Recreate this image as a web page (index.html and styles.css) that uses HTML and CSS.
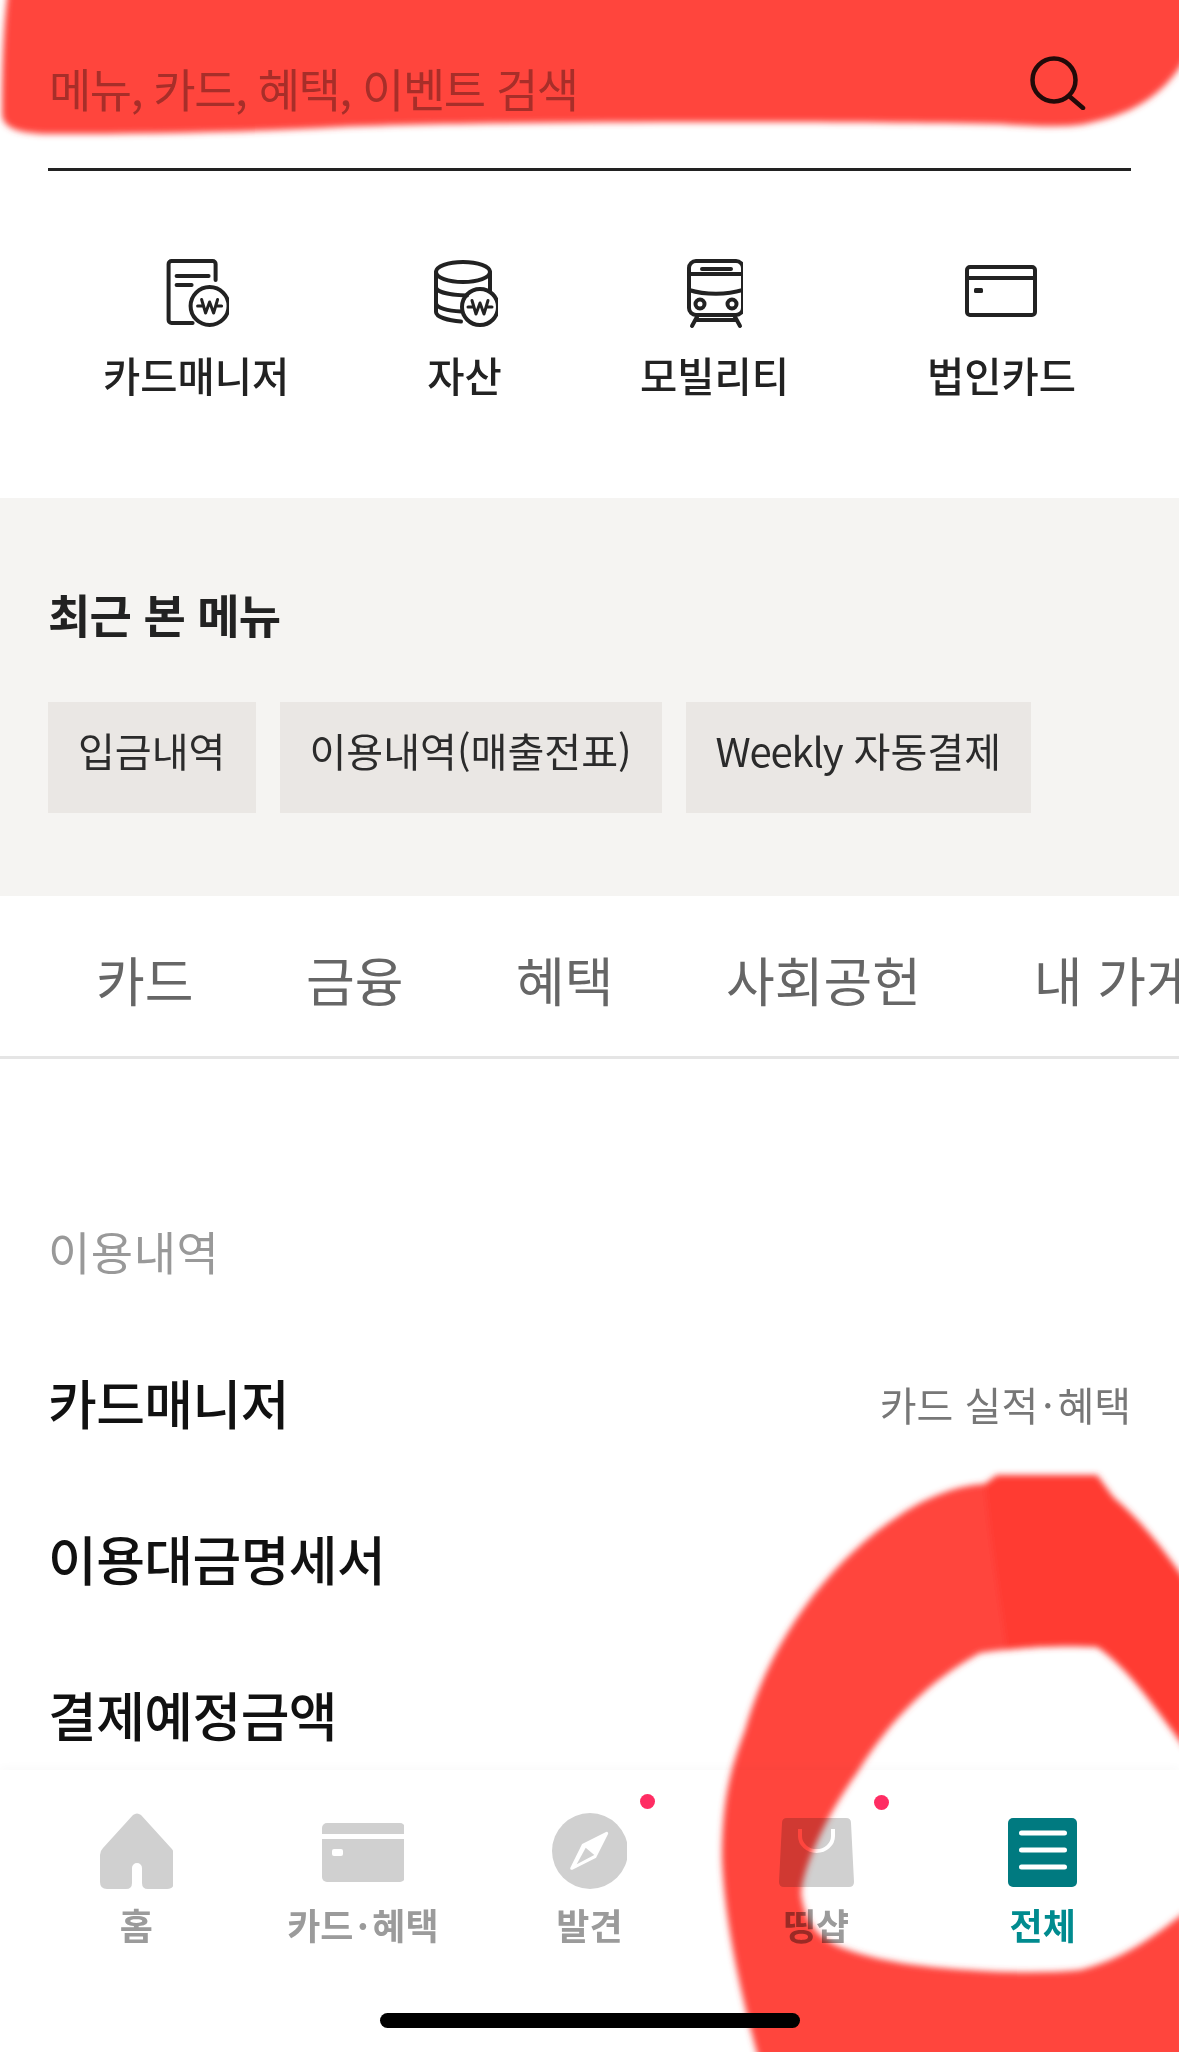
FILE: index.html
```html
<!DOCTYPE html>
<html lang="ko">
<head>
	<meta charset="UTF-8">
	<title>전체 메뉴</title>
	<link rel="stylesheet" href="styles.css">
</head>
<body>
	<div id="page">
		<div class="search">
			<span class="search-text">메뉴, 카드, 혜택, 이벤트 검색</span>
			<svg class="search-icon" viewBox="0 0 56 54" width="56" height="54">
				<circle cx="24" cy="24" r="21.5"/>
				<path d="M39 40L53 52"/>
			</svg>
		</div>

		<ul class="quick">
			<li>
				<svg class="line-icon" viewBox="-3.600 -1 66 72" width="66" height="72">
					<path d="M49 22V6a3 3 0 0 0-3-3H5a3 3 0 0 0-3 3v56a3 3 0 0 0 3 3h21"/>
					<path d="M10 18H42M10 27H25"/>
					<circle cx="43" cy="48" r="19"/>
					<path class="thin" d="M35 41.500L39 55L43 44L47 55L51 41.500M31 48H36M50 48H55"/>
				</svg>
				<span>카드매니저</span>
			</li>
			<li>
				<svg class="line-icon" viewBox="-2 0 66 72" width="66" height="72">
					<ellipse cx="29" cy="15" rx="27" ry="10"/>
					<path d="M2 15V55c0 5 12 8.500 25 9.500M56 15V34"/>
					<path d="M2 30c0 5 14 8 31 8.500M2 46c0 5 12 8 25 8.500"/>
					<circle cx="46" cy="50" r="18"/>
					<path class="thin" d="M38 43.500L42 57L46 46L50 57L54 43.500M34 50H39M53 50H58"/>
				</svg>
				<span>자산</span>
			</li>
			<li>
				<svg class="line-icon" viewBox="-2 0 58 72" width="58" height="72">
					<rect x="2" y="4" width="54" height="54" rx="7"/>
					<path d="M2 17H56M15 12H44"/>
					<path d="M2 33C18 38 40 38 56 33"/>
					<circle cx="13" cy="47" r="4.500"/>
					<circle cx="45" cy="47" r="4.500"/>
					<path d="M11 58L5 69M47 58L53 69M9 63H49"/>
				</svg>
				<span>모빌리티</span>
			</li>
			<li>
				<svg class="line-icon" viewBox="0 0 72 72" width="72" height="72">
					<rect x="2" y="10" width="68" height="48" rx="3"/>
					<path d="M2 21H70"/>
					<rect class="solid" x="9" y="31" width="9" height="5" rx="1.500"/>
				</svg>
				<span>법인카드</span>
			</li>
		</ul>

		<div class="recent">
			<h2>최근 본 메뉴</h2>
			<div class="chips">
				<a class="chip">입금내역</a>
				<a class="chip">이용내역(매출전표)</a>
				<a class="chip"><span class="chip-en">Weekly</span> 자동결제</a>
			</div>
		</div>

		<ul class="tabs">
			<li>카드</li>
			<li>금융</li>
			<li>혜택</li>
			<li>사회공헌</li>
			<li>내 가게</li>
		</ul>

		<div class="menu">
			<h3>이용내역</h3>
			<div class="menu-row"><b>카드매니저</b><span>카드 실적<i class="mid">·</i>혜택</span></div>
			<div class="menu-row"><b>이용대금명세서</b></div>
			<div class="menu-row"><b>결제예정금액</b></div>
		</div>

		<div class="nav">
			<div class="nav-items">
				<div class="nav-item">
					<svg viewBox="-1 0 74 76" width="74" height="76">
						<path class="gray" d="M33 2L3 35Q0 38 0 42V69Q0 76 7 76H26Q32 76 32 70V55a5 5 0 0 1 10 0V70Q42 76 48 76H67Q74 76 74 69V42Q74 38 71 35L41 2Q37 -1 33 2Z"/>
					</svg>
					<span>홈</span>
				</div>
				<div class="nav-item">
					<svg viewBox="-1 0 83 76" width="83" height="76">
						<rect class="gray" x="0" y="10" width="83" height="59" rx="5"/>
						<rect class="white" x="0" y="21" width="83" height="5"/>
						<rect class="white" x="10" y="36" width="11" height="7" rx="2"/>
					</svg>
					<span>카드<i class="mid">·</i>혜택</span>
				</div>
				<div class="nav-item">
					<i class="dot dot-find"></i>
					<svg viewBox="-1 0 76 76" width="76" height="76">
						<circle class="gray" cx="38" cy="38" r="38"/>
						<path class="white kite" d="M19.700 55.300L31.300 32L54.700 20.300L43 43.700Z"/>
						<path class="gray" d="M33.700 34.700L42.300 42L24.700 51.300Z"/>
					</svg>
					<span>발견</span>
				</div>
				<div class="nav-item">
					<i class="dot dot-shop"></i>
					<svg viewBox="0 0 75 76" width="75" height="76">
						<path class="gray" d="M8 5H67Q72 5 72 10L75 69Q75 74 70 74H5Q0 74 0 69L3 10Q3 5 8 5Z"/>
						<path class="handle" d="M21 16V23a16.500 15 0 0 0 33 0V16"/>
					</svg>
					<span>띵샵</span>
				</div>
				<div class="nav-item nav-on">
					<svg viewBox="0 0 69 76" width="69" height="76">
						<rect class="teal" x="0" y="5" width="69" height="69" rx="5"/>
						<path class="bars" d="M13.500 20H56.500M13.500 37H56.500M13.500 54H56.500"/>
					</svg>
					<span>전체</span>
				</div>
			</div>
			<div class="home-bar"></div>
		</div>

		<!-- marker scribbles drawn over the screenshot -->
		<svg class="scribble" viewBox="0 0 1179 2052" width="1179" height="2052">
			<defs>
				<filter id="soft" x="-5%" y="-5%" width="110%" height="110%"><feGaussianBlur stdDeviation="3"/></filter>
			</defs>
			<g filter="url(#soft)">
				<path class="mark" d="M8 -10C3 30 2 70 2 115C3 128 20 134 50 134C150 134 250 132 340 127C500 121 800 121 1000 124C1040 127 1070 127 1085 124C1125 116 1165 100 1190 50L1190 -10Z"/>
				<path class="mark" d="M759 2060C745 2010 725 1930 722 1860C722 1800 730 1770 745 1730C770 1640 830 1560 900 1515C930 1495 960 1485 985 1484L997 1475L1097 1475L1113 1497C1140 1520 1160 1545 1185 1580L1185 1748C1150 1700 1125 1665 1097 1647C1060 1645 1010 1648 980 1653C930 1680 890 1720 857 1773C830 1810 805 1860 801 1893C805 1925 820 1938 840 1947C880 1962 920 1967 969 1970C1010 1973 1050 1973 1080 1970C1120 1960 1150 1940 1185 1912L1185 2060Z"/>
				<path class="mark-dark" d="M985 1484L997 1475L1097 1475L1113 1497C1140 1520 1160 1545 1185 1580L1185 1748C1150 1700 1125 1665 1097 1647C1060 1645 1030 1647 1007 1650C1000 1600 990 1540 985 1484Z"/>
			</g>
		</svg>
	</div>
</body>
</html>
```

FILE: styles.css
```css
*{
	margin:0;
	padding:0;
	box-sizing:border-box;
}
ul{
	list-style:none;
}
i{
	font-style:normal;
}
body{
	background:#fff;
	font-family:"Noto Sans CJK KR","Noto Sans",sans-serif;
	color:#222;
}
#page{
	position:relative;
	width:1179px;
	height:2052px;
	overflow:hidden;
	display:flex;
	flex-direction:column;
}

/* search */
.search{
	flex:none;
	height:171px;
	margin:0 48px;
	padding:55px 0 0 1px;
	display:flex;
	justify-content:space-between;
	align-items:flex-start;
	border-bottom:3px solid #222;
}
.search-text{
	font-size:46px;
	line-height:64px;
	letter-spacing:-1.500px;
	color:#a8a8a8;
}
.search-icon{
	margin-top:1px;
	margin-right:45px;
	fill:none;
	stroke:#222;
	stroke-width:4.500;
	stroke-linecap:round;
}

/* quick links */
.quick{
	flex:none;
	height:327px;
	padding:86px 103px 0 103px;
	display:flex;
	justify-content:space-between;
}
.quick li{
	display:flex;
	flex-direction:column;
	align-items:center;
}
.quick span{
	margin-top:21px;
	font-size:40.500px;
	line-height:50px;
	font-weight:500;
	white-space:nowrap;
}
.line-icon{
	fill:none;
	stroke:#222;
	stroke-width:4;
	stroke-linecap:round;
	stroke-linejoin:round;
}
.line-icon .thin{
	stroke-width:3;
}
.line-icon .solid{
	fill:#222;
	stroke:none;
}

/* recent menu */
.recent{
	flex:none;
	height:398px;
	padding:85px 48px 0;
	background:#f5f4f2;
}
.recent h2{
	font-size:46px;
	line-height:60px;
	letter-spacing:-0.700px;
	font-weight:700;
}
.chips{
	margin-top:59px;
	display:flex;
	gap:24px;
}
.chip{
	height:111px;
	padding:13px 30px 0;
	background:#eae7e4;
	font-size:40.100px;
	line-height:70px;
	color:#2b2b2b;
}
.chip-en{
	letter-spacing:-1.200px;
}

/* tabs */
.tabs{
	flex:none;
	height:163px;
	padding:48px 0 0 96px;
	display:flex;
	gap:112.500px;
	border-bottom:3px solid #e5e5e5;
	font-size:53px;
	line-height:70px;
	color:#666;
	white-space:nowrap;
}

/* menu list */
.menu{
	flex:1;
	min-height:0;
	overflow:hidden;
	padding:161px 48px 0;
}
.menu h3{
	margin-bottom:44px;
	font-size:46px;
	line-height:60px;
	letter-spacing:0.500px;
	font-weight:400;
	color:#999;
}
.menu-row{
	height:156px;
	display:flex;
	justify-content:space-between;
	align-items:center;
}
.menu-row b{
	font-size:53px;
	font-weight:500;
	letter-spacing:-0.600px;
	color:#111;
}
.menu-row span{
	padding-top:3px;
	font-size:40px;
	color:#777;
}
.mid{
	margin:0 0.1em;
}

/* bottom nav */
.nav{
	flex:none;
	position:relative;
	height:282px;
	background:#fff;
	box-shadow:0 -4px 8px rgba(0,0,0,0.02);
}
.nav-items{
	height:243px;
	padding:43px 23px 0;
	display:flex;
}
.nav-item{
	position:relative;
	flex:1;
	display:flex;
	flex-direction:column;
	align-items:center;
	font-size:36px;
	line-height:40px;
	font-weight:700;
	color:#9b9b9b;
}
.nav-item span{
	margin-top:15px;
}
.nav-on{
	color:#008b8f;
}
.dot{
	position:absolute;
	width:15px;
	height:15px;
	border-radius:50%;
	background:#ff2d63;
}
.dot-find{
	top:-19px;
	right:48px;
}
.dot-shop{
	top:-18px;
	right:40px;
}
.gray{
	fill:#d0d0d0;
}
.white{
	fill:#fff;
}
.kite{
	stroke:#fff;
	stroke-width:3;
	stroke-linejoin:round;
}
.teal{
	fill:#007a80;
}
.handle{
	fill:none;
	stroke:#fff;
	stroke-width:4;
}
.bars{
	fill:none;
	stroke:#fff;
	stroke-width:5;
	stroke-linecap:round;
}
.home-bar{
	width:420px;
	height:15px;
	margin:0 auto;
	border-radius:8px;
	background:#000;
}

/* scribble */
.scribble{
	position:absolute;
	top:0;
	left:0;
	mix-blend-mode:multiply;
	pointer-events:none;
}
.mark{
	fill:#ff453e;
}
.mark-dark{
	fill:#ff3b30;
}
```
